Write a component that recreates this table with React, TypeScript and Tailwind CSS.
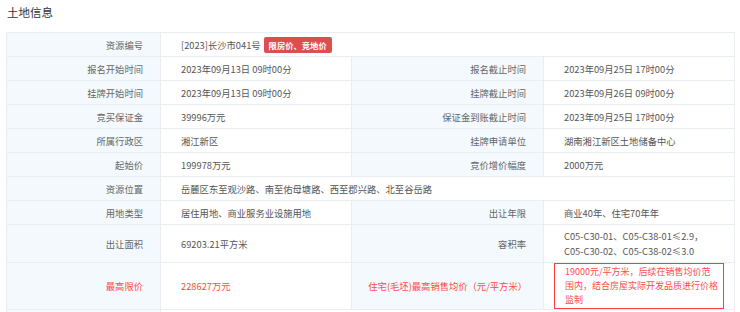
type Cell = { label: string; value: React.ReactNode; red?: boolean };

const font = { fontFamily: '"Noto Sans CJK SC", "Noto Sans", sans-serif' };

function Label({ children, red }: { children: React.ReactNode; red?: boolean }) {
  return (
    <td
      className={`border border-[#e9eef3] bg-[#f3f9fd] pr-[17px] text-right align-middle ${
        red ? "text-[#ff4a4a]" : "text-[#666]"
      }`}
    >
      {children}
    </td>
  );
}

function Value({
  children,
  red,
  span,
  className = "",
}: {
  children: React.ReactNode;
  red?: boolean;
  span?: number;
  className?: string;
}) {
  return (
    <td
      colSpan={span}
      className={`border border-[#e9eef3] bg-white pl-[20px] align-middle ${
        red ? "text-[#ff4a4a]" : "text-[#555]"
      } ${className}`}
    >
      {children}
    </td>
  );
}

function Pair({ left, right, h }: { left: Cell; right: Cell; h: string }) {
  return (
    <tr className={h}>
      <Label red={left.red}>{left.label}</Label>
      <Value red={left.red}>{left.value}</Value>
      <Label red={right.red}>{right.label}</Label>
      <Value red={right.red}>{right.value}</Value>
    </tr>
  );
}

export default function App() {
  return (
    <div className="w-[740px] h-[312px] overflow-hidden bg-white" style={font}>
      <div className="pl-[7px] pt-[3px] h-[32px] text-[11.5px] leading-[18px] text-[#333]">土地信息</div>
      <div className="px-[6px]">
        <table className="w-[728px] table-fixed border-collapse text-[9.3px] leading-[14px]">
          <colgroup>
            <col className="w-[154px]" />
            <col className="w-[191px]" />
            <col className="w-[192px]" />
            <col className="w-[191px]" />
          </colgroup>
          <tbody>
            <tr className="h-[24px]">
              <Label>资源编号</Label>
              <Value span={3}>
                <span className="inline-flex items-center">
                  [2023]长沙市041号
                  <span className="ml-[3px] inline-block h-[16px] rounded-[2px] bg-[#dc4f4f] px-[5px] text-[8.3px] font-bold leading-[16px] text-white">
                    限房价、竞地价
                  </span>
                </span>
              </Value>
            </tr>
            <Pair
              h="h-[24px]"
              left={{ label: "报名开始时间", value: "2023年09月13日 09时00分" }}
              right={{ label: "报名截止时间", value: "2023年09月25日 17时00分" }}
            />
            <Pair
              h="h-[24px]"
              left={{ label: "挂牌开始时间", value: "2023年09月13日 09时00分" }}
              right={{ label: "挂牌截止时间", value: "2023年09月26日 09时00分" }}
            />
            <Pair
              h="h-[24px]"
              left={{ label: "竞买保证金", value: "39996万元" }}
              right={{ label: "保证金到账截止时间", value: "2023年09月25日 17时00分" }}
            />
            <Pair
              h="h-[24px]"
              left={{ label: "所属行政区", value: "湘江新区" }}
              right={{ label: "挂牌申请单位", value: "湖南湘江新区土地储备中心" }}
            />
            <Pair
              h="h-[24px]"
              left={{ label: "起始价", value: "199978万元" }}
              right={{ label: "竞价增价幅度", value: "2000万元" }}
            />
            <tr className="h-[24px]">
              <Label>资源位置</Label>
              <Value span={3}>岳麓区东至观沙路、南至佑母塘路、西至郡兴路、北至谷岳路</Value>
            </tr>
            <Pair
              h="h-[24px]"
              left={{ label: "用地类型", value: "居住用地、商业服务业设施用地" }}
              right={{ label: "出让年限", value: "商业40年、住宅70年年" }}
            />
            <Pair
              h="h-[38px]"
              left={{ label: "出让面积", value: "69203.21平方米" }}
              right={{
                label: "容积率",
                value: (
                  <div className="leading-[15px]">
                    C05-C30-01、C05-C38-01≤2.9，
                    <br />
                    C05-C30-02、C05-C38-02≤3.0
                  </div>
                ),
              }}
            />
            <tr className="h-[47px]">
              <Label red>最高限价</Label>
              <Value red>228627万元</Value>
              <td className="border border-[#e9eef3] bg-[#f3f9fd] pr-[16px] text-right align-middle text-[#ff4a4a]">
                住宅(毛坯)最高销售均价（元/平方米）
              </td>
              <td className="border border-[#e9eef3] bg-white px-[10px] align-middle">
                <div className="whitespace-nowrap border border-[#ff3b3b] pl-[10px] py-[1px] text-[9px] leading-[14px] text-[#ff4a4a]">
                  19000元/平方米，后续在销售均价范
                  <br />
                  围内，结合房屋实际开发品质进行价格
                  <br />
                  监制
                </div>
              </td>
            </tr>
            <tr className="h-[24px]">
              <Label>&nbsp;</Label>
              <Value span={3}>&nbsp;</Value>
            </tr>
          </tbody>
        </table>
      </div>
    </div>
  );
}
